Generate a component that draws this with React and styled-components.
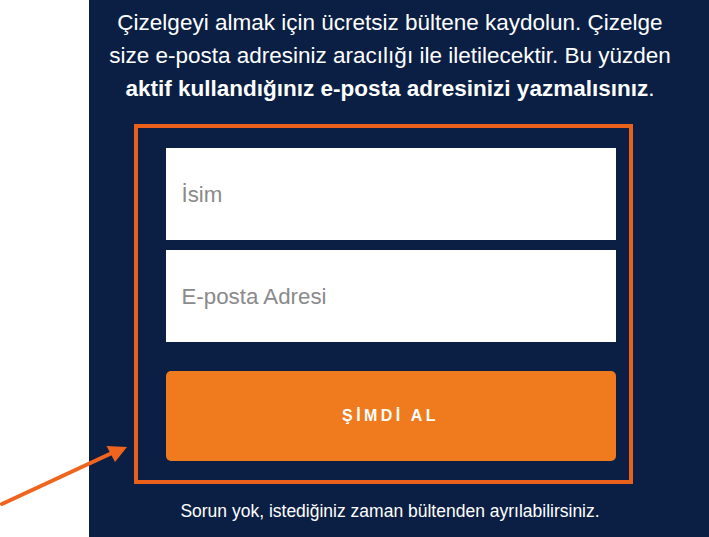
import React from 'react';
import styled, { createGlobalStyle } from 'styled-components';

const GlobalStyle = createGlobalStyle`
    html, body { margin: 0; padding: 0; background: #ffffff; }
    body { font-family: "Liberation Sans", Arial, sans-serif; }
    * { box-sizing: border-box; }
`

const Page = styled.div`
    width: 709px; height: 537px;
    display: flex;
    position: relative;
    overflow: hidden;
    background: #ffffff;
`

const Gutter = styled.div`
    width: 89px;
    flex-shrink: 0;
`

const Panel = styled.section`
    flex: 1;
    background-color: #0b1f44;
    padding: 6px 18px 0 0;
    display: flex;
    flex-direction: column;
    align-items: center;
    color: #ffffff;
`

const Intro = styled.p`
    margin: 0;
    font-size: 22.5px; line-height: 33px;
    text-align: center;
    white-space: nowrap;

    strong { font-weight: bold; }
`

const FrameBox = styled.div`
    width: 499px;
    margin: 19px 0 0 -14px;
    border: 4px solid #e8601c;
    padding: 20px 13px 19px 28px;
    display: flex;
    flex-direction: column;
`

const Field = styled.input`
    width: 450px; height: 92px;
    border: none; outline: none;
    background: #ffffff;
    padding: 2px 16px 0;
    font-family: inherit;
    font-size: 22.3px;
    color: #333333;
    margin-bottom: ${(props) => props.$last ? '29px' : '10px'};

    &::placeholder { color: #8a8a8a; }
`

const SubmitButton = styled.button`
    width: 450px; height: 90px;
    border: none;
    border-radius: 5px;
    background-color: #f07b1e;
    color: #ffffff;
    font-family: inherit;
    font-size: 16px;
    font-weight: bold;
    letter-spacing: 3.4px;
    cursor: pointer;
`

const Note = styled.p`
    margin: 17px 0 0;
    font-size: 17.5px; line-height: 20px;
    text-align: center;
    white-space: nowrap;
`

const Arrow = styled.svg`
    position: absolute;
    left: 0; top: 430px;
`

const App = () => {
    return (
        <>
            <GlobalStyle />
            <Page>
                <Gutter />
                <Panel>
                    <Intro>
                        Çizelgeyi almak için ücretsiz bültene kaydolun. Çizelge<br />
                        size e-posta adresiniz aracılığı ile iletilecektir. Bu yüzden<br />
                        <strong>aktif kullandığınız e-posta adresinizi yazmalısınız</strong>.
                    </Intro>
                    <FrameBox>
                        <Field placeholder="İsim" />
                        <Field placeholder="E-posta Adresi" $last />
                        <SubmitButton>ŞİMDİ AL</SubmitButton>
                    </FrameBox>
                    <Note>Sorun yok, istediğiniz zaman bültenden ayrılabilirsiniz.</Note>
                </Panel>
                {/* annotation arrow pointing at the form */}
                <Arrow width="135" height="80" viewBox="0 0 135 80">
                    <line x1="2" y1="74" x2="112" y2="23" stroke="#f0641e" strokeWidth="4" strokeLinecap="round" />
                    <polygon points="127,17 106.5,16 115,32" fill="#f0641e" />
                </Arrow>
            </Page>
        </>
    )
}

export default App;
